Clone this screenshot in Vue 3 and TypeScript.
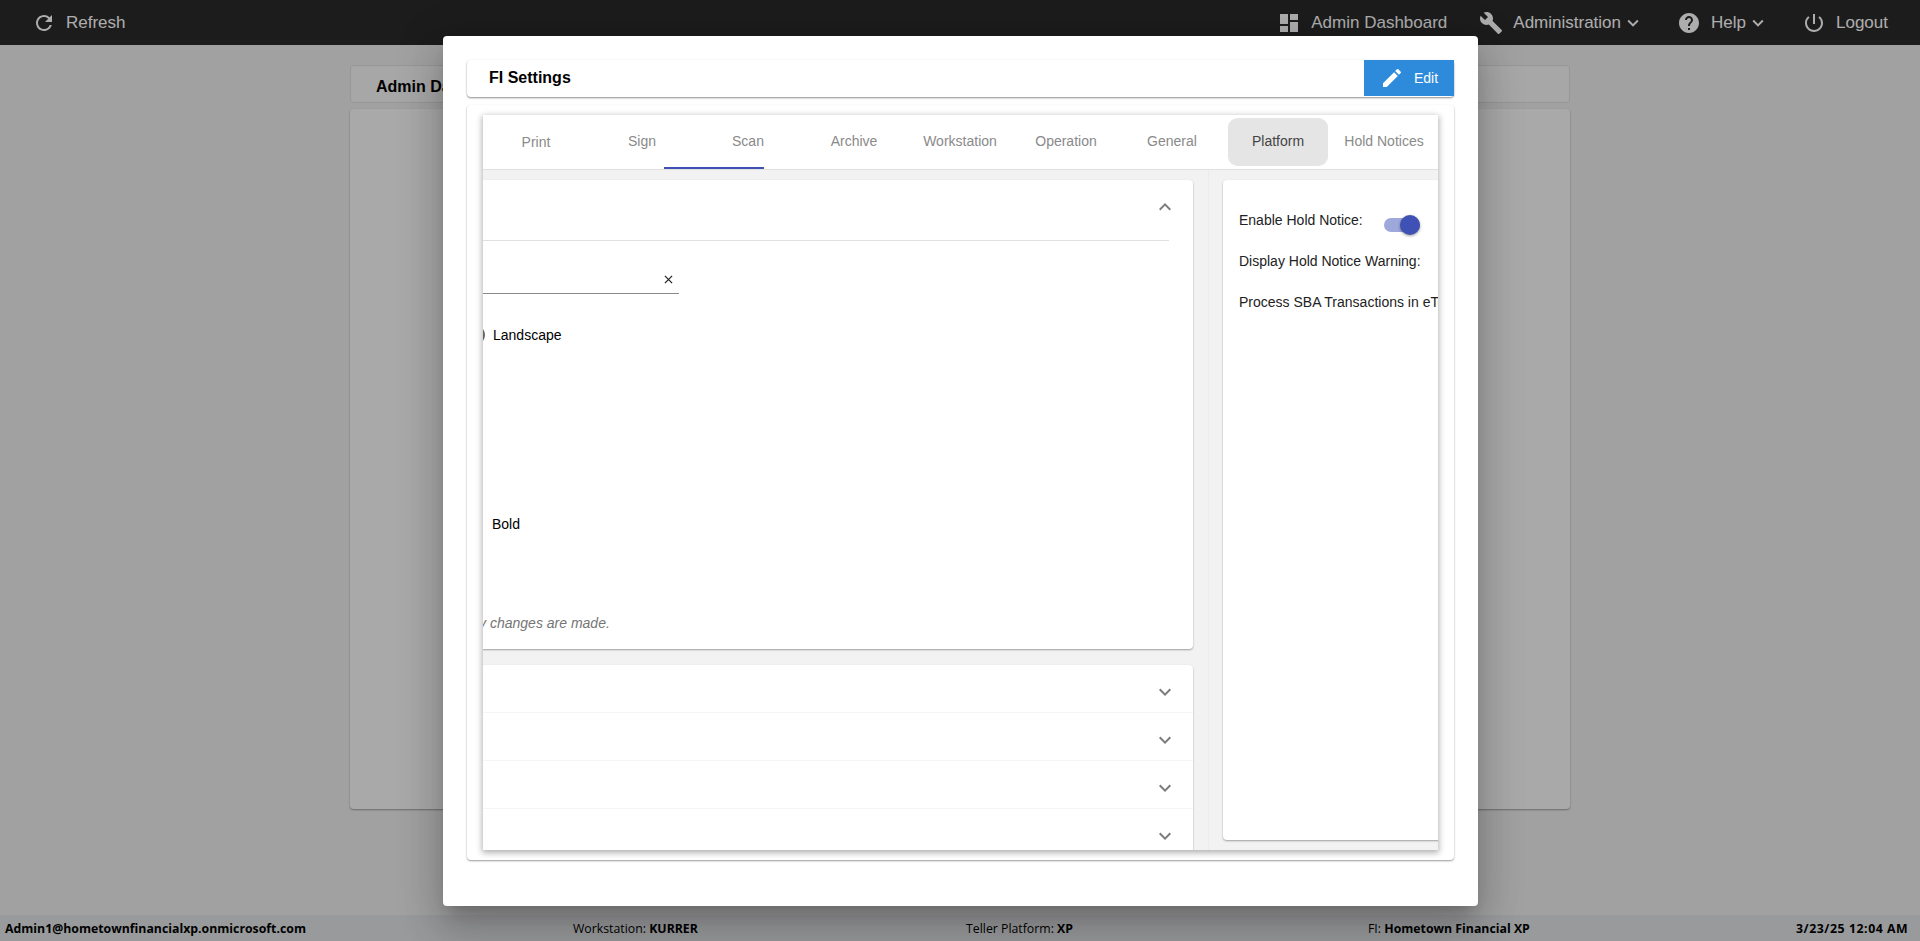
<script setup lang="ts">
const tabs = ['Print', 'Sign', 'Scan', 'Archive', 'Workstation', 'Operation', 'General', 'Platform', 'Hold Notices']
const collapsedRows = [1, 2, 3, 4]
const chevron = 'M16.59 8.59L12 13.17 7.41 8.59 6 10l6 6 6-6z'
</script>

<template>
  <div class="page">
    <header class="topbar">
      <a class="nav-item">
        <svg class="icon" viewBox="0 0 24 24"><path d="M17.65 6.35A7.958 7.958 0 0 0 12 4c-4.42 0-7.99 3.58-7.99 8s3.57 8 7.99 8c3.73 0 6.84-2.55 7.73-6h-2.08A5.99 5.99 0 0 1 12 18c-3.31 0-6-2.69-6-6s2.69-6 6-6c1.66 0 3.14.69 4.22 1.78L13 11h7V4l-2.35 2.35z" /></svg>
        Refresh
      </a>
      <nav class="nav-right">
        <a class="nav-item dash">
          <svg class="icon" viewBox="0 0 24 24"><path d="M3 13h8V3H3v10zm0 8h8v-6H3v6zm10 0h8V11h-8v10zm0-18v6h8V3h-8z" /></svg>
          Admin Dashboard
        </a>
        <a class="nav-item">
          <svg class="icon" viewBox="0 0 24 24"><path d="M22.7 19l-9.1-9.1c.9-2.3.4-5-1.5-6.9-2-2-5-2.4-7.4-1.3L9 6 6 9 1.6 4.7C.4 7.1.9 10.1 2.9 12.1c1.9 1.9 4.6 2.4 6.9 1.5l9.1 9.1c.4.4 1 .4 1.4 0l2.3-2.3c.5-.4.5-1.1.1-1.4z" /></svg>
          Administration
          <svg class="caret" viewBox="0 0 24 24"><path :d="chevron" /></svg>
        </a>
        <a class="nav-item">
          <svg class="icon" viewBox="0 0 24 24"><path d="M12 2C6.48 2 2 6.48 2 12s4.48 10 10 10 10-4.48 10-10S17.52 2 12 2zm1 17h-2v-2h2v2zm2.07-7.75l-.9.92C13.45 12.9 13 13.5 13 15h-2v-.5c0-1.1.45-2.1 1.17-2.83l1.24-1.26c.37-.36.59-.86.59-1.41 0-1.1-.9-2-2-2s-2 .9-2 2H8c0-2.21 1.79-4 4-4s4 1.79 4 4c0 .88-.36 1.68-.93 2.25z" /></svg>
          Help
          <svg class="caret" viewBox="0 0 24 24"><path :d="chevron" /></svg>
        </a>
        <a class="nav-item">
          <svg class="icon" viewBox="0 0 24 24"><path d="M13 3h-2v10h2V3zm4.83 2.17l-1.42 1.42A6.92 6.92 0 0 1 19 12c0 3.87-3.13 7-7 7A6.995 6.995 0 0 1 7.58 6.58L6.17 5.17A8.932 8.932 0 0 0 3 12c0 4.97 4.03 9 9 9s9-4.03 9-9c0-2.74-1.23-5.18-3.17-6.83z" /></svg>
          Logout
        </a>
      </nav>
    </header>

    <main class="content">
      <div class="title-card">Admin Dashboard</div>
      <div class="body-card"></div>
    </main>

    <footer class="statusbar">
      <b>Admin1@hometownfinancialxp.onmicrosoft.com</b>
      <span>Workstation: <b>KURRER</b></span>
      <span>Teller Platform: <b>XP</b></span>
      <span>FI: <b>Hometown Financial XP</b></span>
      <b class="stamp">3/23/25 12:04 AM</b>
    </footer>

    <div class="backdrop"></div>

    <section class="dialog">
      <div class="dialog-head">
        <h2>FI Settings</h2>
        <button class="edit-btn">
          <svg viewBox="0 0 24 24"><path d="M3 17.25V21h3.75L17.81 9.94l-3.75-3.75L3 17.25zM20.71 7.04a1 1 0 0 0 0-1.41l-2.34-2.34a1 1 0 0 0-1.41 0l-1.83 1.83 3.75 3.75 1.83-1.83z" /></svg>
          Edit
        </button>
      </div>

      <div class="outer-card">
        <div class="tab-group">
          <div class="tab-bar">
            <div v-for="tab in tabs" :key="tab" class="tab" :class="{ hover: tab === 'Platform', low: tab === 'Print' }">
              <span>{{ tab }}</span>
            </div>
            <div class="ink-bar"></div>
          </div>

          <div class="tab-body">
            <div class="left-col">
              <div class="panel open">
                <div class="panel-head">
                  <svg class="chev" viewBox="0 0 24 24"><path d="M7.41 15.41L12 10.83l4.59 4.58L18 14l-6-6-6 6z" /></svg>
                </div>
                <div class="field">
                  <svg viewBox="0 0 10 10"><path d="M1 1l8 8M9 1l-8 8" /></svg>
                </div>
                <div class="radio-row">
                  <i class="radio"></i>
                  <span>Landscape</span>
                </div>
                <div class="bold-row">Bold</div>
                <div class="note">any changes are made.</div>
              </div>

              <div class="panel rows">
                <div v-for="row in collapsedRows" :key="row" class="row">
                  <svg class="chev" viewBox="0 0 24 24"><path :d="chevron" /></svg>
                </div>
              </div>
            </div>

            <div class="right-col">
              <div class="panel hold">
                <div class="hold-row">
                  <label>Enable Hold Notice:</label>
                  <div class="toggle"><i></i></div>
                </div>
                <div class="hold-row"><label>Display Hold Notice Warning:</label></div>
                <div class="hold-row"><label>Process SBA Transactions in eTeller:</label></div>
              </div>
            </div>
          </div>
        </div>
      </div>
    </section>
  </div>
</template>

<style>
html,
body {
  margin: 0;
  overflow: hidden;
}
</style>

<style scoped>
.page {
  position: relative;
  display: flex;
  flex-direction: column;
  height: 941px;
  background: #eeeeee;
  font-family: "Liberation Sans", Arial, sans-serif;
  color: #000;
  overflow: hidden;
}

.topbar {
  display: flex;
  flex: none;
  align-items: center;
  justify-content: space-between;
  height: 45px;
  padding: 0 32px;
  background: #2a2a2a;
}

.nav-right {
  display: flex;
  align-items: center;
  gap: 33px;
}

.nav-item {
  display: flex;
  align-items: center;
  gap: 10px;
  color: #fff;
  font-size: 17px;
  white-space: nowrap;
}

.nav-item.dash {
  margin-right: -1px;
}

.icon {
  width: 24px;
  height: 24px;
  fill: #fff;
}

.caret {
  width: 22px;
  height: 22px;
  margin-left: -9px;
  fill: #fff;
}

.content {
  flex: 1;
  display: flex;
  flex-direction: column;
  gap: 6px;
  width: 1220px;
  margin: 20px auto 0;
}

.title-card {
  box-sizing: border-box;
  height: 38px;
  padding-left: 25px;
  line-height: 42px;
  font-size: 16px;
  font-weight: 700;
  background: #f6f6f6;
  border: 1px solid #dedede;
  border-radius: 4px;
}

.body-card {
  height: 700px;
  background: #fafafa;
  border-radius: 4px;
  box-shadow: 0 1px 2px rgba(0, 0, 0, 0.35);
}

.statusbar {
  display: grid;
  flex: none;
  grid-template-columns: 568px 393px 402px 428px 1fr;
  align-items: center;
  height: 26px;
  margin-top: auto;
  padding-left: 5px;
  background: #e2e4e6;
  font-family: "Open Sans", "Noto Sans", sans-serif;
  font-size: 12.3px;
  white-space: nowrap;
}

.stamp {
  letter-spacing: 0.55px;
}

.backdrop {
  position: absolute;
  inset: 0;
  background: rgba(0, 0, 0, 0.32);
}

.dialog {
  position: absolute;
  top: 36px;
  left: 443px;
  box-sizing: border-box;
  width: 1035px;
  height: 870px;
  padding: 24px;
  background: #fff;
  border-radius: 4px;
  box-shadow: 0 11px 15px -7px rgba(0, 0, 0, 0.2), 0 24px 38px 3px rgba(0, 0, 0, 0.14), 0 9px 46px 8px rgba(0, 0, 0, 0.12);
}

.dialog-head {
  display: flex;
  align-items: flex-start;
  justify-content: space-between;
  height: 37px;
  border-radius: 4px;
  box-shadow: 0 1px 2px rgba(0, 0, 0, 0.45);
}

.dialog-head h2 {
  margin: 0;
  padding-left: 22px;
  font-size: 16px;
  line-height: 36px;
  font-weight: 700;
}

.edit-btn {
  display: flex;
  align-items: center;
  gap: 10px;
  width: 90px;
  height: 36px;
  padding: 0 0 0 16px;
  border: 0;
  background: #2e8bdc;
  color: #fff;
  font-family: inherit;
  font-size: 14px;
}

.edit-btn svg {
  width: 24px;
  height: 24px;
  fill: #fff;
}

.outer-card {
  box-sizing: border-box;
  height: 755px;
  margin-top: 8px;
  padding: 10px 16px;
  border-radius: 4px;
  box-shadow: 0 1px 2px rgba(0, 0, 0, 0.4);
}

.tab-group {
  display: flex;
  flex-direction: column;
  height: 735px;
  box-shadow: 0 2px 6px 1px rgba(0, 0, 0, 0.3);
}

.tab-bar {
  position: relative;
  display: flex;
  flex: none;
  height: 54px;
  border-bottom: 1px solid #e0e0e0;
  background: #fff;
}

.tab {
  flex: none;
  display: flex;
  align-items: center;
  justify-content: center;
  width: 100px;
  margin: 3px;
  padding-bottom: 2px;
  font-size: 14px;
  color: #8a8a8a;
  white-space: nowrap;
}

.tab.low span {
  padding-top: 2px;
}

.tab.hover {
  background: #e5e5e5;
  border-radius: 10px / 9px;
  color: #444;
}

.ink-bar {
  position: absolute;
  left: 181px;
  bottom: 0;
  width: 100px;
  height: 2px;
  background: #3f51b5;
}

.tab-body {
  flex: 1;
  display: flex;
  min-height: 0;
  overflow: hidden;
  background: #f2f2f2;
}

.left-col {
  flex: none;
  width: 770px;
  margin-left: -60px;
  padding-top: 10px;
}

.right-col {
  flex: none;
  height: 670px;
  padding: 10px 0 0 14px;
  border-left: 1px solid #ececec;
  margin-left: 15px;
}

.panel {
  background: #fff;
  border-radius: 4px;
  box-shadow: 0 1px 2px rgba(0, 0, 0, 0.35);
}

.panel.open {
  height: 469px;
  font-size: 14px;
}

.panel-head {
  display: flex;
  justify-content: flex-end;
  box-sizing: border-box;
  height: 61px;
  margin-right: 24px;
  padding-top: 15px;
  border-bottom: 1px solid #e0e0e0;
}

.chev {
  width: 24px;
  height: 24px;
  fill: #7c7c7c;
}

.panel-head .chev {
  margin-right: -8px;
}

.field {
  display: flex;
  align-items: flex-end;
  justify-content: flex-end;
  box-sizing: border-box;
  width: 256px;
  height: 53px;
  padding: 0 6px 9px 0;
  border-bottom: 1px solid #8a8a8a;
}

.field svg {
  width: 9px;
  height: 9px;
  fill: none;
  stroke: #222;
  stroke-width: 1.4;
}

.radio-row {
  display: flex;
  align-items: center;
  gap: 8px;
  height: 20px;
  margin-top: 31px;
}

.radio {
  box-sizing: border-box;
  width: 20px;
  height: 20px;
  margin-left: 42px;
  border: 2px solid #666;
  border-radius: 50%;
}

.bold-row {
  margin-top: 171px;
  padding-left: 69px;
  line-height: 16px;
}

.note {
  margin-top: 83px;
  padding-left: 40.5px;
  line-height: 16px;
  font-size: 14px;
  font-style: italic;
  color: #757575;
}

.panel.rows {
  margin-top: 16px;
}

.row {
  display: flex;
  justify-content: flex-end;
  box-sizing: border-box;
  height: 48px;
  padding: 15px 16px 0 0;
  border-bottom: 1px solid #f5f5f5;
}

.panel.hold {
  box-sizing: border-box;
  width: 400px;
  height: 660px;
  padding: 32px 0 0 16px;
  font-size: 14px;
}

.hold-row {
  display: flex;
  height: 41px;
  line-height: 16px;
  white-space: nowrap;
}

.hold-row label {
  width: 145px;
  color: #222;
}

.toggle {
  position: relative;
  width: 36px;
  height: 14px;
  margin-top: 6px;
  border-radius: 7px;
  background: #9fa8da;
}

.toggle i {
  position: absolute;
  top: -3px;
  right: 0;
  width: 20px;
  height: 20px;
  border-radius: 50%;
  background: #3f51b5;
  box-shadow: 0 1px 3px rgba(0, 0, 0, 0.4);
}
</style>
